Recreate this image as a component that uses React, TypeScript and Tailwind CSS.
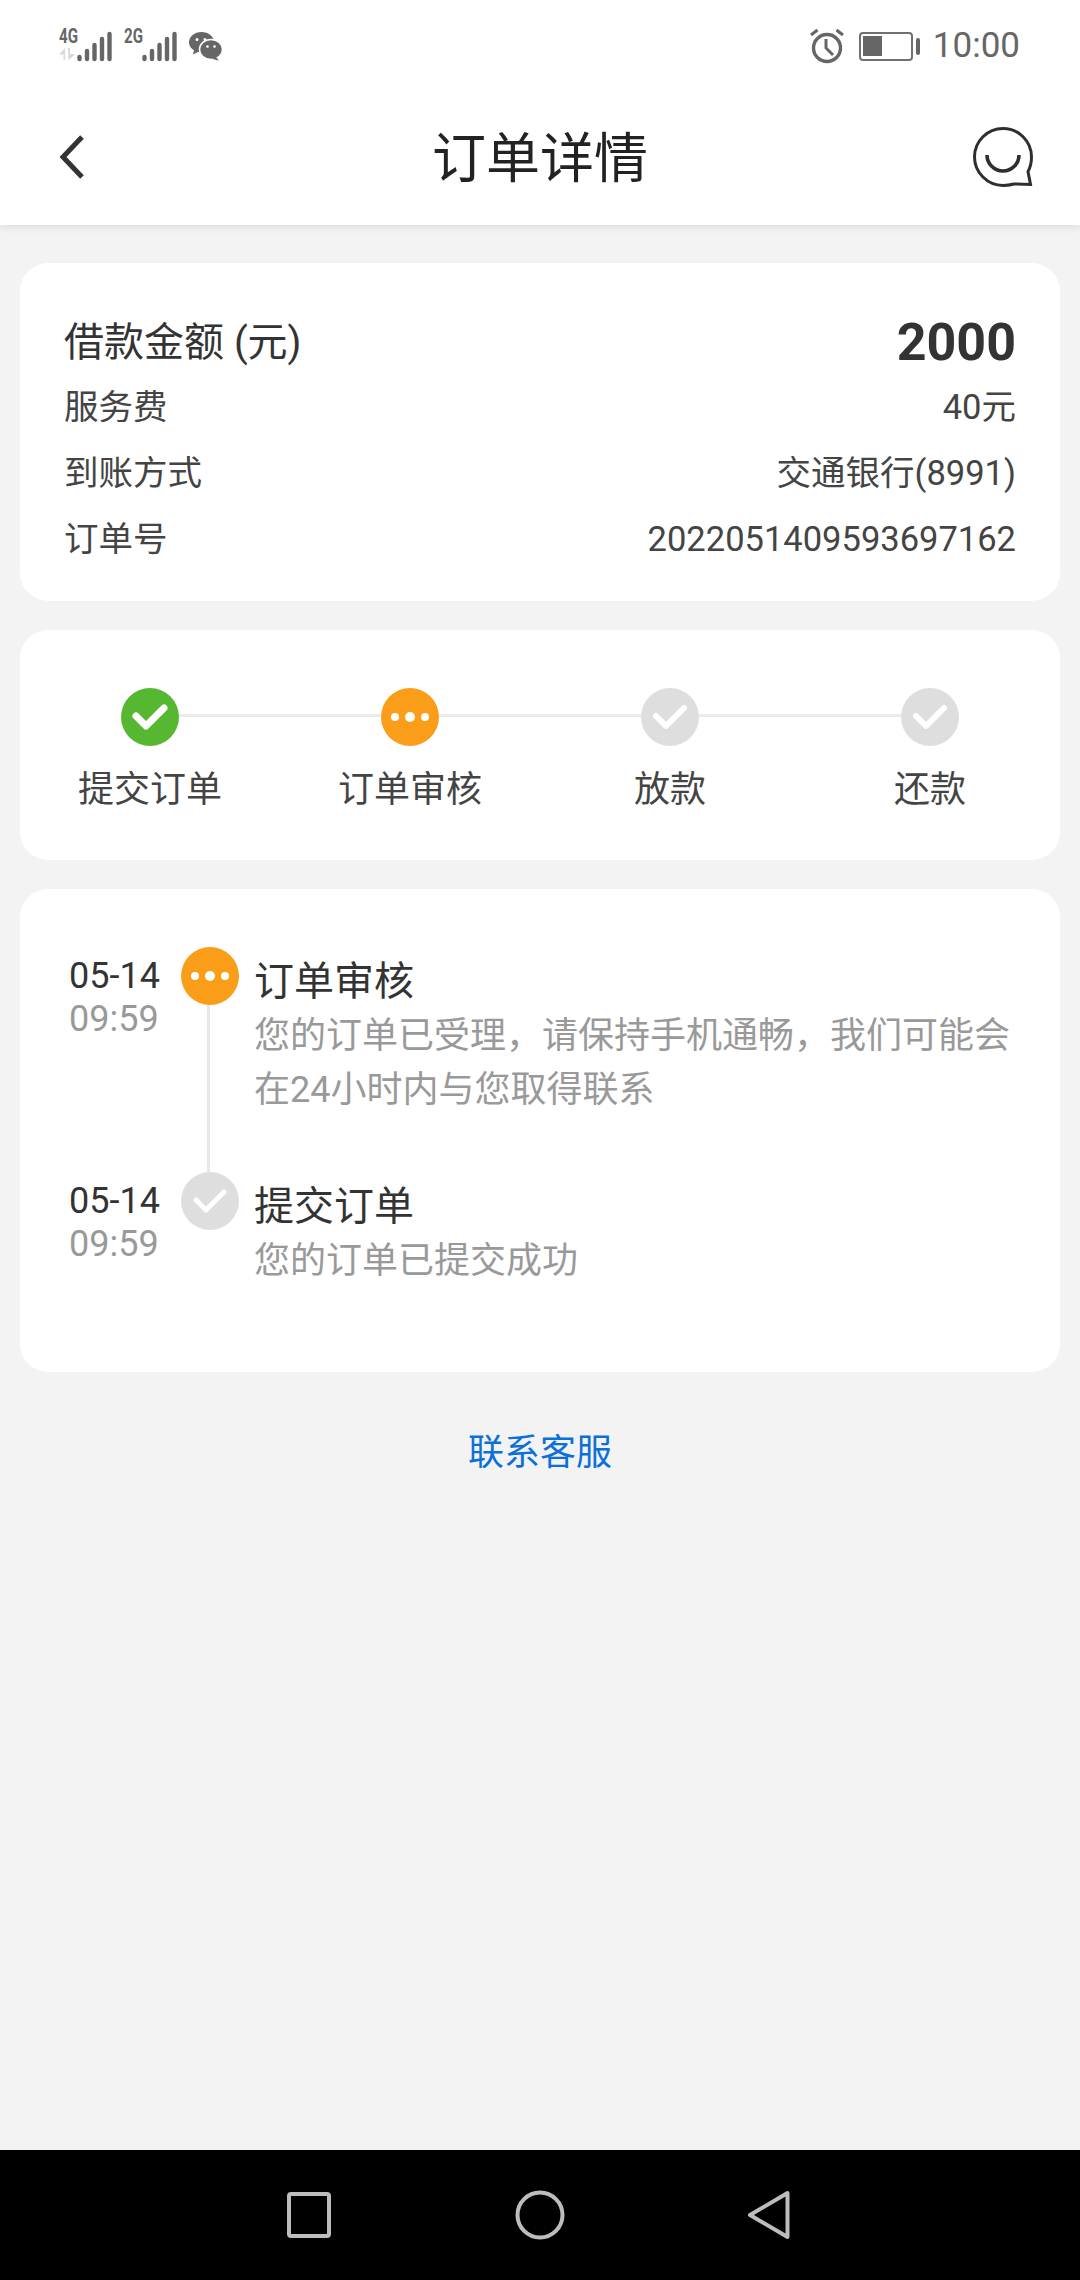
const font = { fontFamily: 'Roboto, "Noto Sans CJK SC", sans-serif' };

function Signal({ label, arrows }: { label: string; arrows?: boolean }) {
  return (
    <svg width="56" height="42" viewBox="0 -6 56 42" className="-mt-[6px] block">
      <text x="0" y="16" fontSize="20" fontWeight="700" fill="#666" fontFamily="Roboto, sans-serif" textLength="19" lengthAdjust="spacingAndGlyphs">{label}</text>
      {arrows && <path d="M0 27.5 L6 21 V33 H4.5 V27.5 Z M9 21 H11 V27 L16 27.5 L9.5 33 Z" fill="#d8d8d8" />}
      <g stroke="#666" strokeWidth="4.4" strokeLinecap="round">
        <path d="M20.5 30 V32" />
        <path d="M28 24 V32" />
        <path d="M35.5 18 V32" />
        <path d="M43 12 V32" />
        <path d="M50.5 7 V32" />
      </g>
    </svg>
  );
}

function Wechat() {
  return (
    <svg width="34" height="30" viewBox="0 0 34 30" className="block">
      <path d="M13.5 1 C6.5 1 1 5.5 1 11.2 C1 14.6 3 17.5 6 19.3 L5 23.5 L10 21 C11.2 21.3 12.3 21.4 13.5 21.4 C20.5 21.4 26 16.8 26 11.2 C26 5.5 20.5 1 13.5 1 Z" fill="#666" />
      <ellipse cx="23" cy="18.5" rx="11.5" ry="10" fill="#666" stroke="#fff" strokeWidth="1.5" />
      <path d="M28 26 L31 29.5 L24 28 Z" fill="#666" />
      <circle cx="9" cy="8.5" r="1.5" fill="#fff" />
      <circle cx="17" cy="8.5" r="1.5" fill="#fff" />
      <circle cx="19.5" cy="15.5" r="1.3" fill="#fff" />
      <circle cx="26.5" cy="15.5" r="1.3" fill="#fff" />
    </svg>
  );
}

function StatusBar() {
  return (
    <div className="relative z-10 flex h-[66px] items-start justify-between bg-white pl-[59px] pr-[60px] pt-[26px]" style={font}>
      <div className="flex items-start gap-[9px] pt-[1px]">
        <Signal label="4G" arrows />
        <Signal label="2G" />
        <div className="ml-[-1px] pt-[4px]"><Wechat /></div>
      </div>
      <div className="flex items-center">
        <svg width="36" height="36" viewBox="0 0 36 36" className="block">
          <circle cx="18" cy="20" r="13.5" fill="none" stroke="#666" strokeWidth="3.4" />
          <path d="M17 11 V20 L24 27" fill="none" stroke="#666" strokeWidth="3" />
          <path d="M2 7 L8.5 2 M34 7 L27.5 2" stroke="#666" strokeWidth="3" />
        </svg>
        <div className="ml-[14px] flex h-[29px] w-[54px] items-center rounded-[4px] border-[2px] border-[#707070] pl-[2px]">
          <div className="h-[20px] w-[19px] bg-[#666]" />
        </div>
        <div className="ml-[3px] h-[17px] w-[4px] rounded-[2px] bg-[#666]" />
        <span className="ml-[13px] text-[35px] leading-[40px] text-[#666]">10:00</span>
      </div>
    </div>
  );
}

function Header() {
  return (
    <div className="relative grid h-[159px] grid-cols-[1fr_auto_1fr] items-center bg-white pl-[58px] pr-[47px] pt-[23px] shadow-[0_2px_8px_rgba(0,0,0,0.1)]">
      <svg width="28" height="46" viewBox="0 0 28 46" className="block">
        <path d="M24 3 L5 23 L24 43" fill="none" stroke="#333" strokeWidth="5" />
      </svg>
      <h1 className="mr-[11px] pt-[6px] text-[54px] font-normal leading-[60px] text-[#222]" style={font}>订单详情</h1>
      <svg width="60" height="60" viewBox="0 0 60 60" className="block justify-self-end">
        <path d="M30 1.5 C45.5 1.5 58.5 14 58.5 30 C58.5 37 57 41 55 44.5 L57.5 57.5 L41 57 C37 58 34 58.5 30 58.5 C14.5 58.5 1.5 45.5 1.5 30 C1.5 14 14.5 1.5 30 1.5 Z" fill="none" stroke="#2e2e2e" strokeWidth="3" />
        <path d="M14 28 A16 16 0 0 0 46 28" fill="none" stroke="#2e2e2e" strokeWidth="3.6" />
      </svg>
    </div>
  );
}

function Row({ label, value }: { label: string; value: string }) {
  return (
    <div className="flex h-[66px] items-center justify-between text-[34.5px] text-[#444]">
      <span>{label}</span>
      <span>{value}</span>
    </div>
  );
}

function StatusDot({ kind, thin }: { kind: 'green' | 'orange' | 'gray'; thin?: boolean }) {
  const bg = kind === 'green' ? 'bg-[#55b830]' : kind === 'orange' ? 'bg-[#fa9e19]' : 'bg-[#dedede]';
  return (
    <div className={`flex h-[58px] w-[58px] shrink-0 items-center justify-center rounded-full ${bg}`}>
      {kind === 'orange' ? (
        <svg width="44" height="14" viewBox="0 0 44 14" className="block">
          <circle cx="7" cy="7" r="4" fill="#fff" />
          <circle cx="22" cy="7" r="5" fill="#fff" />
          <circle cx="37" cy="7" r="4" fill="#fff" />
        </svg>
      ) : (
        <svg width="36" height="28" viewBox="0 0 36 28" className="block">
          <path d="M4 13 L14 23 L32 5" fill="none" stroke="#fff" strokeWidth={kind === 'green' ? 7 : thin ? 5 : 6} strokeLinecap="round" strokeLinejoin="round" />
        </svg>
      )}
    </div>
  );
}

function Step({ label, kind, left, right }: { label: string; kind: 'green' | 'orange' | 'gray'; left: boolean; right: boolean }) {
  return (
    <div className="flex flex-col items-center">
      <div className="flex w-full items-center">
        <div className={`h-[3px] flex-1 -translate-y-[2px] ${left ? 'bg-[#ebebeb]' : ''}`} />
        <StatusDot kind={kind} />
        <div className={`h-[3px] flex-1 -translate-y-[2px] ${right ? 'bg-[#ebebeb]' : ''}`} />
      </div>
      <span className="mt-[19px] text-[36px] leading-[50px] text-[#444]">{label}</span>
    </div>
  );
}

function TimelineItem({ title, desc, line, gap }: { title: string; desc: string[]; line: boolean; gap: string }) {
  return (
    <div className={`flex ${gap}`}>
      <div className="w-[112px] shrink-0 pt-[8px] text-[36px] leading-[43px]">
        <div className="text-[#333]">05-14</div>
        <div className="text-[#999]">09:59</div>
      </div>
      <div className="flex w-[58px] shrink-0 flex-col items-center">
        <StatusDot kind={line ? 'orange' : 'gray'} thin />
        {line && <div className="mr-[4px] w-[3px] flex-1 bg-[#e8e8e8]" />}
      </div>
      <div className="ml-[15px] min-w-0 flex-1">
        <div className="pt-[8px] text-[40px] leading-[54px] text-[#333]">{title}</div>
        {desc.map((d) => (
          <div key={d} className="text-[36px] leading-[54px] text-[#999]">{d}</div>
        ))}
      </div>
    </div>
  );
}

export default function App() {
  return (
    <div className="flex h-[2280px] w-[1080px] flex-col overflow-hidden bg-[#f3f3f3]" style={font}>
      <StatusBar />
      <Header />
      <main className="flex flex-1 flex-col px-[20px] pt-[38px]">
        <section className="h-[338px] rounded-[28px] bg-white px-[44px] pt-[47px]">
          <div className="flex h-[65px] items-center justify-between text-[#333]">
            <span className="text-[40px]">借款金额 (元)</span>
            <span className="text-[52px] font-bold">2000</span>
          </div>
          <Row label="服务费" value="40元" />
          <Row label="到账方式" value="交通银行(8991)" />
          <Row label="订单号" value="2022051409593697162" />
        </section>

        <section className="mt-[29px] grid h-[230px] grid-cols-4 rounded-[28px] bg-white pt-[58px]">
          <Step label="提交订单" kind="green" left={false} right />
          <Step label="订单审核" kind="orange" left right />
          <Step label="放款" kind="gray" left right />
          <Step label="还款" kind="gray" left right={false} />
        </section>

        <section className="mt-[29px] h-[483px] rounded-[28px] bg-white pl-[49px] pr-[44px] pt-[58px]">
          <TimelineItem
            title="订单审核"
            desc={['您的订单已受理，请保持手机通畅，我们可能会', '在24小时内与您取得联系']}
            line
            gap="h-[225px]"
          />
          <TimelineItem title="提交订单" desc={['您的订单已提交成功']} line={false} gap="" />
        </section>

        <div className="mt-[56px] text-center text-[36px] leading-[50px] text-[#0b70d8]">联系客服</div>
      </main>
      <nav className="flex h-[130px] items-center justify-between bg-black pl-[287px] pr-[290px]">
        <svg width="44" height="46" viewBox="0 0 44 46" className="block">
          <rect x="2" y="2" width="40" height="42" rx="2" fill="none" stroke="#bdbdbd" strokeWidth="4" />
        </svg>
        <svg width="50" height="50" viewBox="0 0 50 50" className="ml-[2px] block">
          <circle cx="25" cy="25" r="22.5" fill="none" stroke="#bdbdbd" strokeWidth="4" />
        </svg>
        <svg width="43" height="50" viewBox="0 0 43 50" className="block">
          <path d="M40.5 3 V47 L3 25 Z" fill="none" stroke="#bdbdbd" strokeWidth="4" strokeLinejoin="round" />
        </svg>
      </nav>
    </div>
  );
}
